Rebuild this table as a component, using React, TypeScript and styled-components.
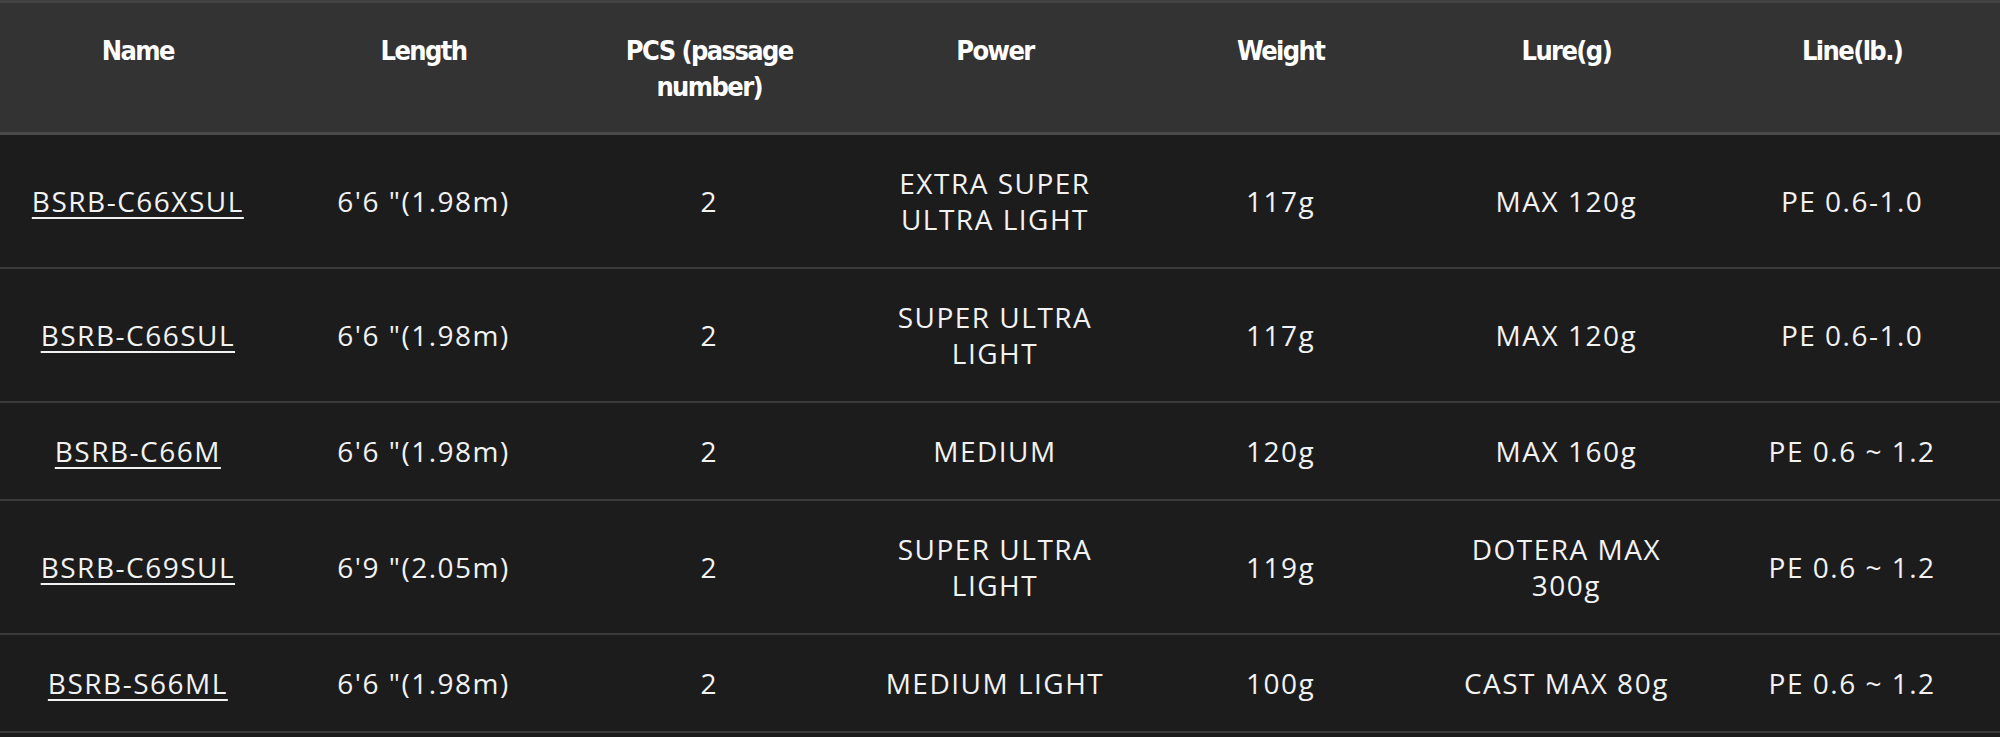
import React from 'react';
import styled, { createGlobalStyle } from 'styled-components';

type RodType = {
  name: string,
  length: string,
  pcs: string,
  power: string,
  weight: string,
  lure: string,
  line: string,
};

const headers = ['Name', 'Length', 'PCS (passage number)', 'Power', 'Weight', 'Lure(g)', 'Line(lb.)'];

const rods: RodType[] = [
  { name: 'BSRB-C66XSUL', length: '6\'6 "(1.98m)', pcs: '2', power: 'EXTRA SUPER ULTRA LIGHT', weight: '117g', lure: 'MAX 120g', line: 'PE 0.6-1.0' },
  { name: 'BSRB-C66SUL', length: '6\'6 "(1.98m)', pcs: '2', power: 'SUPER ULTRA LIGHT', weight: '117g', lure: 'MAX 120g', line: 'PE 0.6-1.0' },
  { name: 'BSRB-C66M', length: '6\'6 "(1.98m)', pcs: '2', power: 'MEDIUM', weight: '120g', lure: 'MAX 160g', line: 'PE 0.6 ~ 1.2' },
  { name: 'BSRB-C69SUL', length: '6\'9 "(2.05m)', pcs: '2', power: 'SUPER ULTRA LIGHT', weight: '119g', lure: 'DOTERA MAX 300g', line: 'PE 0.6 ~ 1.2' },
  { name: 'BSRB-S66ML', length: '6\'6 "(1.98m)', pcs: '2', power: 'MEDIUM LIGHT', weight: '100g', lure: 'CAST MAX 80g', line: 'PE 0.6 ~ 1.2' },
];

const GlobalStyle = createGlobalStyle`
  html, body {
    margin: 0;
    padding: 0;
    background: #1c1c1c;
  }
`;

export default function App() {
  return (
    <>
      <GlobalStyle />
      <SpecTable>
        <thead>
          <tr>
            {headers.map((h, i) => (
              <HeadCell key={i}>
                <HeadLabel>{h}</HeadLabel>
              </HeadCell>
            ))}
          </tr>
        </thead>
        <tbody>
          {rods.map((rod, i) => (
            <Row key={i}>
              <Cell><ModelLink href="#">{rod.name}</ModelLink></Cell>
              <Cell>{rod.length}</Cell>
              <Cell>{rod.pcs}</Cell>
              <Cell>{rod.power}</Cell>
              <Cell>{rod.weight}</Cell>
              <Cell>{rod.lure}</Cell>
              <Cell>{rod.line}</Cell>
            </Row>
          ))}
        </tbody>
      </SpecTable>
    </>
  );
}

const SpecTable = styled.table`
  width: 100%;
  border-collapse: collapse;
  table-layout: fixed;
  background: #1c1c1c;
  border-top: 3px solid #434343;
`;

const HeadCell = styled.th`
  background: #333333;
  border-bottom: 3px solid #4a4a4a;
  padding: 30px 10px 27px 0;
  vertical-align: top;
  text-align: center;
`;

const HeadLabel = styled.div`
  width: 190px;
  margin: 0 auto;
  color: #ffffff;
  font-family: 'DejaVu Sans Condensed', 'Liberation Sans Narrow', sans-serif;
  font-size: 27px;
  font-weight: 700;
  line-height: 36px;
  letter-spacing: -1.6px;
`;

const Row = styled.tr`
  border-bottom: 2px solid #3a3a3a;
`;

const Cell = styled.td`
  padding: 30px 20px 30px 10px;
  text-align: center;
  vertical-align: middle;
  color: #f2f2f2;
  font-family: 'Open Sans', 'Noto Sans', sans-serif;
  font-size: 28px;
  line-height: 36px;
  letter-spacing: 1.5px;
`;

const ModelLink = styled.a`
  color: #f2f2f2;
  text-decoration: underline;
  text-underline-offset: 5px;
  text-decoration-thickness: 2px;
`;
